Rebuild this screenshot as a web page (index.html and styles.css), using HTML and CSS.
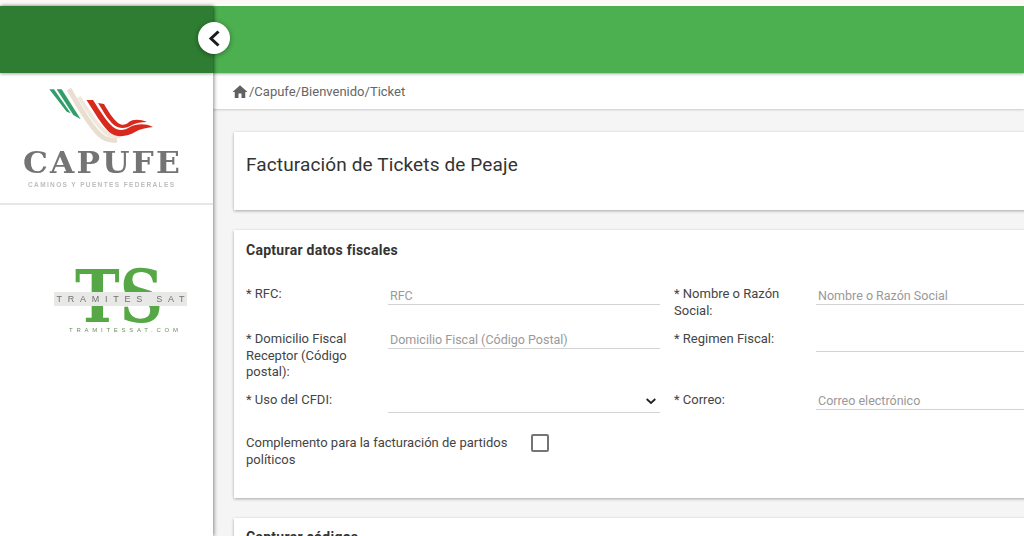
FILE: index.html
```html
<!DOCTYPE html>
<html lang="es">
<head>
<meta charset="utf-8">
<title>Facturación de Tickets de Peaje</title>
<link rel="stylesheet" href="styles.css">
</head>
<body>
<div class="strip"></div>
<div class="app">
  <aside class="sidebar">
    <div class="side-head"></div>
    <div class="brand">
      <svg class="brand-svg" viewBox="0 74 213 130" width="213" height="130">
        <path class="g" d="M49.300 89.300h4.700l16.700 24-4-1.600z"/>
        <path class="g" d="M56.700 89.300h5l19 30-7.400-4.300z"/>
        <path class="b1" d="M69 89C79 107 90 125 99 134C104 139 110 141 117 140"/>
        <path class="b2" d="M79 97C87 110 96 124 104 131C108 135 114 137 120 136"/>
        <path class="r" d="M86.500 100L93 100C100 111 107 122 113 127C118 131 124 131 130 127C136 124 145 123 153 127C146 128 140 129 135 132C127 137 116 138 109 132C102 125 94 112 86.500 100Z"/>
        <path class="r" d="M98 103L104 104C108 111 113 119 118 123C122 126 126 125 129 122C133 119 140 119 147 122C141 122 136 123 132 125C126 129 119 129 114 125C108 120 103 111 98 103Z"/>
        <text class="capufe" x="102.500" y="173" text-anchor="middle" textLength="159" lengthAdjust="spacingAndGlyphs">CAPUFE</text>
        <text class="capufe-sub" x="101" y="187" text-anchor="middle" textLength="146">CAMINOS Y PUENTES FEDERALES</text>
      </svg>
    </div>
    <div class="ts">
      <svg class="ts-svg" viewBox="0 205 213 140" width="213" height="140">
        <text class="ts-big" x="75" y="322" textLength="88" lengthAdjust="spacingAndGlyphs">TS</text>
        <rect class="ts-bar" x="54" y="292" width="133" height="14"/>
        <text class="ts-name" x="120.500" y="302" text-anchor="middle" textLength="128">TRAMITES SAT</text>
        <text class="ts-url" x="123.500" y="332" text-anchor="middle" textLength="109">TRAMITESSAT.COM</text>
      </svg>
    </div>
  </aside>
  <button class="toggle" aria-label="Contraer menú">
    <svg viewBox="0 0 24 24" width="24" height="24"><path d="M16.500 5.500L9 12.500l7.500 7" fill="none" stroke="#1c1c1c" stroke-width="3"/></svg>
  </button>
  <div class="main">
    <header class="topbar"></header>
    <nav class="crumbs">
      <svg viewBox="0 0 24 24" width="18" height="18"><path d="M10 20v-6h4v6h5v-8h3L12 3 2 12h3v8z" fill="#616161"/></svg>
      <span>/Capufe/Bienvenido/Ticket</span>
    </nav>
    <div class="content">
      <section class="card card-title">
        <h1>Facturación de Tickets de Peaje</h1>
      </section>
      <section class="card card-form">
        <h2>Capturar datos fiscales</h2>
        <div class="form-grid">
          <label class="lbl lbl-first">* RFC:</label>
          <input class="field" placeholder="RFC">
          <label class="lbl lbl-first">* Nombre o Razón Social:</label>
          <input class="field" placeholder="Nombre o Razón Social">

          <label class="lbl">* Domicilio Fiscal Receptor (Código postal):</label>
          <input class="field" placeholder="Domicilio Fiscal (Código Postal)">
          <label class="lbl">* Regimen Fiscal:</label>
          <div class="field field-tall"></div>

          <label class="lbl">* Uso del CFDI:</label>
          <div class="field field-tall field-select">
            <svg viewBox="0 0 10 7" width="10" height="7"><path d="M.7 1l4.300 4 4.300-4" fill="none" stroke="#222" stroke-width="1.800"/></svg>
          </div>
          <label class="lbl">* Correo:</label>
          <input class="field" placeholder="Correo electrónico">
        </div>
        <div class="check-row">
          <label class="lbl check-lbl">Complemento para la facturación de partidos políticos</label>
          <span class="checkbox"></span>
        </div>
      </section>
      <section class="card card-next">
        <h2>Capturar códigos</h2>
      </section>
    </div>
  </div>
</div>
</body>
</html>
```

FILE: styles.css
```css
* { box-sizing: border-box; }
html, body { margin: 0; height: 536px; overflow: hidden; }
body { font-family: Roboto, "Liberation Sans", sans-serif; background: #fef9f6; color: #333; }
.strip { height: 6px; }
.app { display: flex; height: 530px; position: relative; }

.sidebar { width: 213px; flex: none; background: #fff; box-shadow: 1px 0 4px rgba(0,0,0,.45); z-index: 2; display: flex; flex-direction: column; }
.side-head { height: 67px; background: #2e7d32; box-shadow: 0 1px 3px rgba(0,0,0,.35); margin-bottom: 1px; }
.brand { height: 131px; border-bottom: 2px solid #e6e6e6; }
.brand-svg, .ts-svg { display: block; filter: blur(.35px); }
.g { fill: #2f9e68; }
.b1 { fill: none; stroke: #e9decf; stroke-width: 5; }
.b2 { fill: none; stroke: #efe8dc; stroke-width: 4; }
.r { fill: #d8291d; }
.capufe { font-family: "DejaVu Serif", serif; font-weight: 700; font-size: 29px; letter-spacing: 2px; fill: #747474; }
.capufe-sub { font-family: "Liberation Sans", sans-serif; font-weight: 700; font-size: 6.500px; fill: #bdbdbd; }
.ts-big { font-family: "DejaVu Serif", serif; font-weight: 700; font-size: 73px; fill: #55a845; }
.ts-bar { fill: #e8e8e6; }
.ts-name { font-family: "Liberation Sans", sans-serif; font-size: 9px; fill: #707070; }
.ts-url { font-family: "Liberation Sans", sans-serif; font-size: 6px; fill: #6d8f5f; }

.toggle { position: absolute; left: 198px; top: 16px; width: 32px; height: 32px; padding: 0; border: 0; border-radius: 50%; background: #fff; box-shadow: 0 1px 5px rgba(0,0,0,.4); z-index: 3; display: flex; align-items: center; justify-content: center; }

.main { flex: 1; min-width: 0; background: #f5f5f5; overflow: hidden; }
.topbar { height: 67px; background: #4caf50; box-shadow: 0 1px 3px rgba(0,0,0,.3); position: relative; }
.crumbs { height: 35px; margin-top: 1px; background: #fff; box-shadow: 0 1px 2px rgba(0,0,0,.18); display: flex; align-items: center; padding-left: 18px; font-size: 13px; color: #666; }

.content { padding: 23px 0 0 21px; width: 860px; }
.card { background: #fff; box-shadow: 0 1px 3px rgba(0,0,0,.32); }
.card-title { height: 78px; padding: 21px 12px 0; margin-bottom: 20px; }
h1 { margin: 0; font-weight: 400; font-size: 19px; line-height: 24px; letter-spacing: .13px; color: #333; }
.card-form { height: 268px; padding: 11px 12px 0; margin-bottom: 20px; }
h2 { margin: 0; font-weight: 700; font-size: 14px; line-height: 18px; letter-spacing: .27px; color: #333; }

.form-grid { display: grid; grid-template-columns: 142px 272px 142px 400px; grid-template-rows: 44px 61px 43px; margin-top: 27px; }
.form-grid > :nth-child(4n+3) { margin-left: 14px; margin-right: -14px; }
.form-grid > :nth-child(4n) { margin-left: 14px; }
.lbl { font-size: 13px; line-height: 16.500px; color: #444; display: block; margin-top: 1px; }
.lbl-first { margin-top: 0; }
.field { display: block; width: 100%; height: 19px; padding: 0 2px; border: 0; border-bottom: 1px solid #d3d3d3; background: transparent; font: 12.500px Roboto, sans-serif; color: #333; outline: none; }
.field::placeholder { color: #999; opacity: 1; }
.field-tall { height: 22px; }
.field-select { display: flex; justify-content: flex-end; align-items: center; padding-right: 4px; }
.check-row { display: flex; align-items: flex-start; }
.check-lbl { width: 285px; margin-top: 1px; }
.checkbox { width: 18px; height: 18px; border: 2px solid #757575; border-radius: 2px; background: #fff; }
.card-next { height: 60px; padding: 10px 12px 0; }
```
